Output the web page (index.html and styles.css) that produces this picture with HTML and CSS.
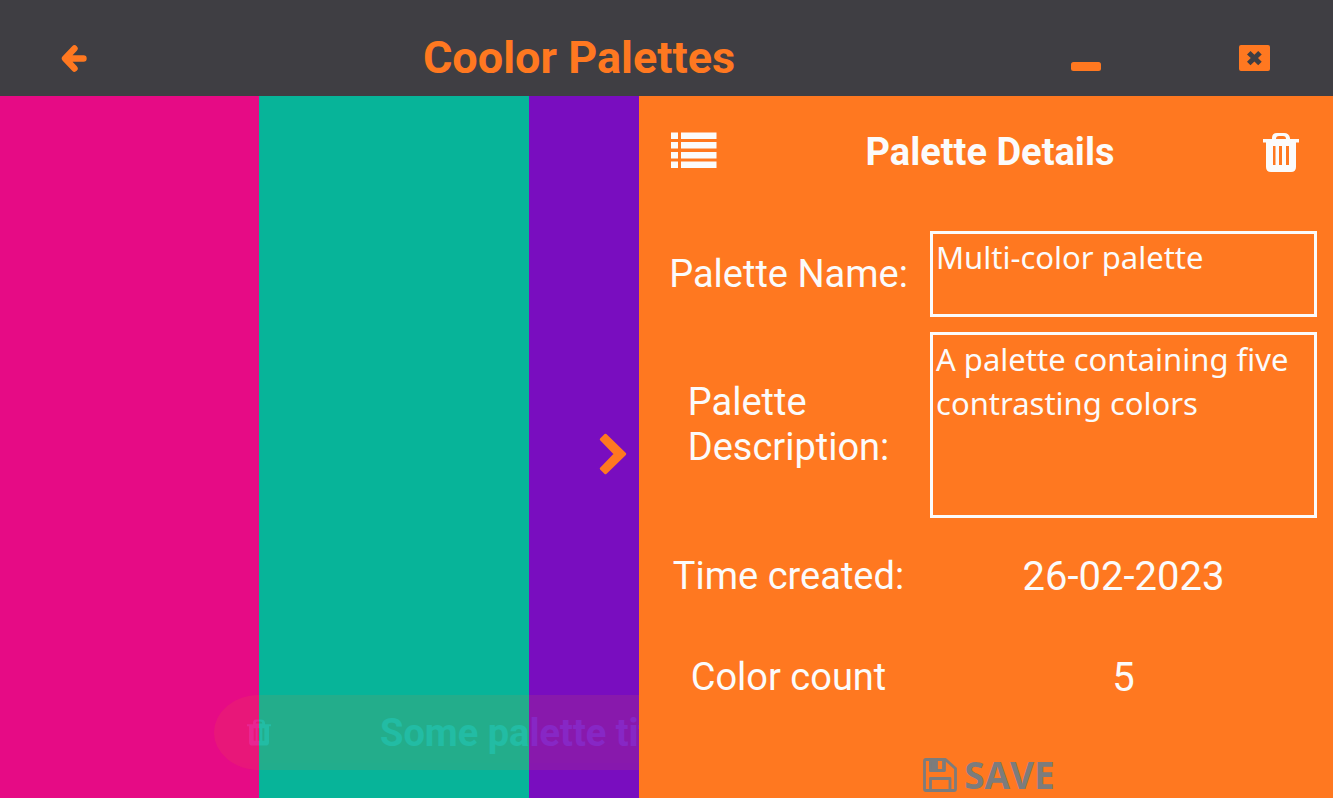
FILE: index.html
```html
<!DOCTYPE html>
<html lang="en">
<head>
<meta charset="utf-8">
<meta name="viewport" content="width=device-width, initial-scale=1">
<title>Coolor Palettes</title>
<link rel="stylesheet" href="styles.css">
</head>
<body>
<div class="app">
  <header class="titlebar">
    <button class="icon-button back" type="button" aria-label="Back">
      <svg width="26" height="28" viewBox="0 0 26 28"><path d="M13.500 4.500 4 14.500 13.500 24.500M5 14.500H22.500" fill="none" stroke="currentColor" stroke-width="6.400" stroke-linecap="round" stroke-linejoin="round"/></svg>
    </button>
    <h1 class="app-title">Coolor Palettes</h1>
    <button class="icon-button" type="button" aria-label="Minimize">
      <svg width="30" height="26" viewBox="0 0 30 26"><rect y="17" width="30" height="9" rx="2.5" fill="currentColor"/></svg>
    </button>
    <button class="icon-button" type="button" aria-label="Close">
      <svg width="31" height="26" viewBox="0 0 31 26"><path fill="currentColor" fill-rule="evenodd" d="M2 0H29Q31 0 31 2V24Q31 26 29 26H2Q0 26 0 24V2Q0 0 2 0ZM11.500 6 8 9.500 11.800 13 8 16.700 11.500 20.200 15.400 16.500 19.200 20.200 22.700 16.700 19 13 22.700 9.500 19.200 6 15.400 9.800Z"/></svg>
    </button>
  </header>
  <main class="workspace">
    <section class="stage" aria-label="Palette colors">
      <div class="stripe pink"></div>
      <div class="stripe teal"></div>
      <div class="stripe purple"></div>
      <div class="caption">
        <svg width="24" height="27" viewBox="0 0 36 39"><path fill="currentColor" fill-rule="evenodd" d="M9 7V5Q9 0 14 0H21Q26 0 27 5V7H36V10H33V34Q33 39 28 39H8Q3 39 3 34V10H0V7ZM13 6H23Q23 3 20 3H16Q13 3 13 6ZM10 13V32H13V13ZM16 13V32H19V13ZM23 13V32H26V13Z"/></svg>
        <span>Some palette title</span>
      </div>
      <button class="icon-button collapse" type="button" aria-label="Hide details">
        <svg width="28" height="42" viewBox="0 0 28 42"><path d="M6.500 2 26 21 6.500 40 2 35.500 16 21 2 6.500Z" fill="currentColor" stroke="currentColor" stroke-width="2.500" stroke-linejoin="round"/></svg>
      </button>
    </section>
    <section class="details">
      <div class="details-head">
        <button class="icon-button" type="button" aria-label="List palettes">
          <svg width="46" height="40" viewBox="0 0 46 40" fill="currentColor"><path d="M0 .5H7V7H0ZM10 .5H45.500V7H10ZM0 10H7V16.500H0ZM10 10H45.500V16.500H10ZM0 20H7V26.500H0ZM10 20H45.500V26.500H10ZM0 29.500H7V36H0ZM10 29.500H45.500V36H10Z"/></svg>
        </button>
        <h2>Palette Details</h2>
        <button class="icon-button" type="button" aria-label="Delete palette">
          <svg width="36" height="39" viewBox="0 0 36 39"><path fill="currentColor" fill-rule="evenodd" d="M9 6V5Q9 0 14 0H21Q26 0 27 5V6H36V9.500H33V34Q33 39 28 39H8Q3 39 3 34V9.500H0V6ZM13 6H23Q23 3 20 3H16Q13 3 13 6ZM10 13V32H12.500V13ZM16 13V32H19V13ZM23 13V32H26V13Z"/></svg>
        </button>
      </div>
      <form class="fields">
        <label for="name">Palette Name:</label>
        <input id="name" type="text" value="Multi-color palette">
        <label for="description">Palette<br>Description:</label>
        <textarea id="description" rows="4" spellcheck="false">A palette containing five contrasting colors</textarea>
        <span>Time created:</span>
        <span class="value">26-02-2023</span>
        <span>Color count</span>
        <span class="value">5</span>
        <button class="save" type="button">
          <svg width="34" height="34" viewBox="0 0 34 34" fill="none" stroke="currentColor" stroke-width="2.800" stroke-linejoin="round"><path d="M3 1.500H22.500L32.500 10.500V31Q32.500 32.500 31 32.500H3Q1.500 32.500 1.500 31V3Q1.500 1.500 3 1.500Z"/><path d="M7.500 32V20.500H27V32"/><path d="M7.500 2V12.500H21.500V2"/><path d="M7.500 2H13.500V12.500H7.500ZM20.500 2V12.500" fill="currentColor"/></svg>
          SAVE
        </button>
      </form>
    </section>
  </main>
</div>
</body>
</html>
```
FILE: styles.css
```css
* {
  box-sizing: border-box;
}

body {
  margin: 0;
  font-family: Roboto, sans-serif;
  color: #fbfbfb;
}

h1,
h2 {
  margin: 0;
}

svg {
  display: block;
}

.icon-button {
  padding: 0;
  border: 0;
  background: none;
  color: inherit;
  cursor: pointer;
}

.app {
  display: flex;
  flex-direction: column;
  min-height: 100vh;
}

.titlebar {
  display: grid;
  grid-template-columns: 162fr 834fr 180fr 157fr;
  align-items: center;
  justify-items: center;
  min-height: 96px;
  padding-top: 20px;
  background: #3f3e43;
  color: #ff7820;
}

.back {
  justify-self: start;
  padding-left: 61px;
}

.app-title {
  font-size: 45px;
  line-height: 56px;
}

.workspace {
  flex: 1;
  display: grid;
  grid-template-columns: 639fr 694fr;
}

.stage {
  position: relative;
  overflow: hidden;
  display: grid;
  grid-template-columns: 259fr 270fr 110fr;
}

.pink {
  background: #e60b85;
}

.teal {
  background: #07b499;
}

.purple {
  background: #790dbf;
}

.caption {
  position: absolute;
  left: 214px;
  bottom: 28px;
  display: flex;
  align-items: center;
  gap: 109px;
  width: 905px;
  height: 75px;
  padding-left: 33px;
  border-radius: 5% / 50%;
  background: #ff7820;
  font-size: 38px;
  font-weight: 700;
  white-space: nowrap;
  opacity: 0.11;
}

.collapse {
  position: absolute;
  right: 12px;
  top: 48%;
  color: #ff7820;
}

.details {
  padding: 0 16px 0 8px;
  background: #ff7820;
}

.details-head {
  display: flex;
  align-items: center;
  justify-content: space-between;
  min-height: 112px;
  margin-bottom: 23px;
  padding: 0 18px 0 24px;
}

.details-head h2 {
  font-size: 38px;
  line-height: 48px;
}

.fields {
  display: grid;
  grid-template-columns: 283fr 387fr;
  grid-template-rows: 86px auto 86px 86px auto;
  row-gap: 15px;
  align-items: center;
  justify-items: center;
  font-size: 38px;
  line-height: 45px;
}

.value {
  font-size: 40px;
}

.fields input,
.fields textarea {
  display: block;
  width: 100%;
  margin: 0;
  padding: 2px 3px;
  border: 3px solid #fbfbfb;
  border-radius: 0;
  outline: 0;
  background: transparent;
  color: inherit;
  font: 31px/44px "Noto Sans", sans-serif;
  resize: none;
  overflow: hidden;
}

.fields input {
  height: 86px;
  padding-bottom: 36px;
}

.save {
  grid-column: 1 / -1;
  display: flex;
  align-items: center;
  gap: 7px;
  margin-top: 18px;
  margin-left: 14px;
  padding: 0;
  border: 0;
  background: none;
  color: #7c7c7c;
  font: 700 37px/44px "Open Sans", sans-serif;
  cursor: pointer;
}
```
